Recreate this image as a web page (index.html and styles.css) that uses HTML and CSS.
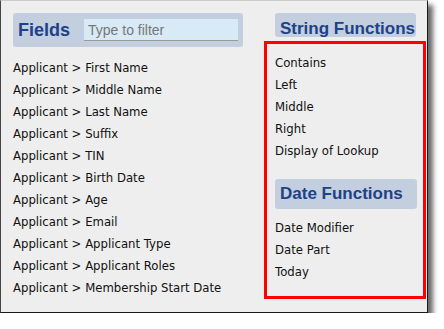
FILE: index.html
```html
<!DOCTYPE html>
<html lang="en">
	<head>
		<meta charset="UTF-8" />
		<title>Fields and Functions</title>
		<link rel="stylesheet" href="styles.css">
	</head>
	<body>
		<div class="panel">
			<div class="fields-col">
				<div class="fields-head">
					<span class="head-title">Fields</span>
					<input type="text" class="filter" placeholder="Type to filter" />
				</div>
				<ul class="list">
					<li>Applicant &gt; First Name</li>
					<li>Applicant &gt; Middle Name</li>
					<li>Applicant &gt; Last Name</li>
					<li>Applicant &gt; Suffix</li>
					<li>Applicant &gt; TIN</li>
					<li>Applicant &gt; Birth Date</li>
					<li>Applicant &gt; Age</li>
					<li>Applicant &gt; Email</li>
					<li>Applicant &gt; Applicant Type</li>
					<li>Applicant &gt; Applicant Roles</li>
					<li>Applicant &gt; Membership Start Date</li>
				</ul>
			</div>
			<div class="func-col">
				<div class="func-head string-head">String Functions</div>
				<div class="highlight">
					<ul class="list">
						<li>Contains</li>
						<li>Left</li>
						<li>Middle</li>
						<li>Right</li>
						<li>Display of Lookup</li>
					</ul>
					<div class="func-head date-head">Date Functions</div>
					<ul class="list">
						<li>Date Modifier</li>
						<li>Date Part</li>
						<li>Today</li>
					</ul>
				</div>
			</div>
		</div>
	</body>
</html>
```
FILE: styles.css
```css
body {
	margin: 0;
	background-color: #fff;
	font-family: 'DejaVu Sans', Verdana, sans-serif;
	font-size: 11.7px;
	color: #111;
}
.panel {
	display: flex;
	width: 428px;
	height: 313px;
	box-sizing: border-box;
	border: 1px solid #1a1a1a;
	border-top-color: #ccc;
	border-left-color: #444;
	background-color: #eeeeee;
	box-shadow: 5px 5px 5px rgba(0, 0, 0, 0.6);
}
.fields-col {
	width: 251px;
	padding: 12px 0 0 12px;
	box-sizing: border-box;
}
.fields-head {
	display: flex;
	align-items: center;
	height: 34px;
	width: 230px;
	padding: 0 4px 0 5px;
	box-sizing: border-box;
	background-color: #c3cede;
	border-radius: 3px;
}
.head-title {
	flex: none;
	width: 66px;
	font-family: 'Liberation Sans', Arial, sans-serif;
	font-weight: bold;
	font-size: 18px;
	color: #1c4289;
}
.filter {
	flex: none;
	width: 154px;
	height: 22px;
	box-sizing: border-box;
	border: none;
	border-bottom: 1px solid #9a9a9a;
	background-color: #d7eaf5;
	padding: 0 4px;
	font-family: 'Liberation Sans', Arial, sans-serif;
	font-size: 14px;
	outline: none;
}
.filter::placeholder {
	color: #777;
}
.list {
	list-style: none;
	margin: 0;
	padding: 0;
}
.list li {
	height: 22px;
	line-height: 24px;
	white-space: nowrap;
}
.fields-col .list {
	margin-top: 9px;
}
.func-col {
	padding: 12px 0 0 12px;
}
.func-head {
	font-family: 'Liberation Sans', Arial, sans-serif;
	font-weight: bold;
	font-size: 17px;
	color: #1c4289;
	background-color: #c3cede;
	border-radius: 3px;
	padding-left: 5px;
	box-sizing: border-box;
	white-space: nowrap;
}
.string-head {
	width: 141px;
	height: 24px;
	line-height: 31px;
	overflow: hidden;
	margin-left: 11px;
	margin-bottom: 4px;
}
.highlight {
	width: 162px;
	height: 258px;
	box-sizing: border-box;
	border: 3px solid #ff0000;
	padding: 7px 0 0 8px;
}
.date-head {
	width: 142px;
	height: 30px;
	line-height: 30px;
	margin: 18px 0 7px;
}
```
